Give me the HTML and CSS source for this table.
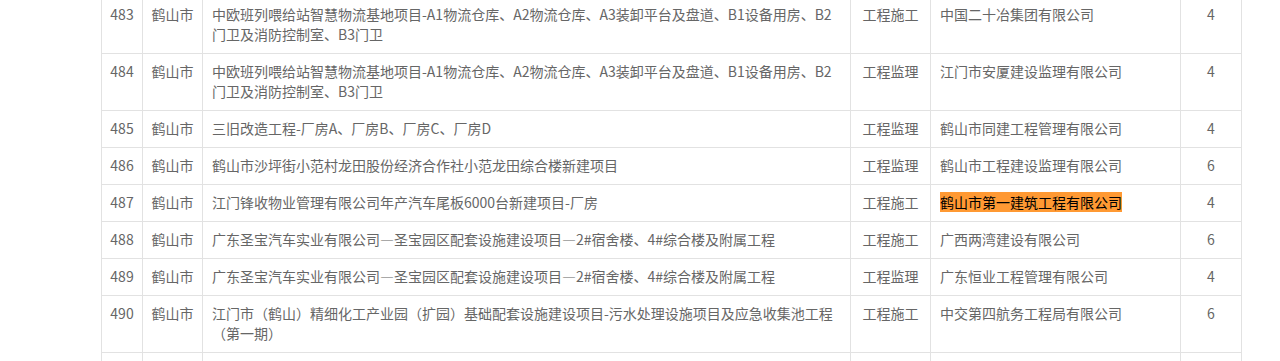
FILE: index.html
```html
<!DOCTYPE html>
<html lang="zh-CN">
<head>
<meta charset="utf-8">
<title>项目列表</title>
<link rel="stylesheet" href="styles.css">
</head>
<body>
<div class="page">
  <table class="list">
    <colgroup>
      <col class="c-no"><col class="c-city"><col class="c-name"><col class="c-type"><col class="c-unit"><col class="c-num">
    </colgroup>
    <tbody>
      <tr><td class="ctr">483</td><td class="ctr">鹤山市</td><td>中欧班列喂给站智慧物流基地项目-A1物流仓库、A2物流仓库、A3装卸平台及盘道、B1设备用房、B2门卫及消防控制室、B3门卫</td><td class="ctr">工程施工</td><td>中国二十冶集团有限公司</td><td class="ctr">4</td></tr>
      <tr><td class="ctr">484</td><td class="ctr">鹤山市</td><td>中欧班列喂给站智慧物流基地项目-A1物流仓库、A2物流仓库、A3装卸平台及盘道、B1设备用房、B2门卫及消防控制室、B3门卫</td><td class="ctr">工程监理</td><td>江门市安厦建设监理有限公司</td><td class="ctr">4</td></tr>
      <tr><td class="ctr">485</td><td class="ctr">鹤山市</td><td>三旧改造工程-厂房A、厂房B、厂房C、厂房D</td><td class="ctr">工程监理</td><td>鹤山市同建工程管理有限公司</td><td class="ctr">4</td></tr>
      <tr><td class="ctr">486</td><td class="ctr">鹤山市</td><td>鹤山市沙坪街小范村龙田股份经济合作社小范龙田综合楼新建项目</td><td class="ctr">工程监理</td><td>鹤山市工程建设监理有限公司</td><td class="ctr">6</td></tr>
      <tr><td class="ctr">487</td><td class="ctr">鹤山市</td><td>江门锋收物业管理有限公司年产汽车尾板6000台新建项目-厂房</td><td class="ctr">工程施工</td><td><span class="hl">鹤山市第一建筑工程有限公司</span></td><td class="ctr">4</td></tr>
      <tr><td class="ctr">488</td><td class="ctr">鹤山市</td><td>广东圣宝汽车实业有限公司—圣宝园区配套设施建设项目—2#宿舍楼、4#综合楼及附属工程</td><td class="ctr">工程施工</td><td>广西两湾建设有限公司</td><td class="ctr">6</td></tr>
      <tr><td class="ctr">489</td><td class="ctr">鹤山市</td><td>广东圣宝汽车实业有限公司—圣宝园区配套设施建设项目—2#宿舍楼、4#综合楼及附属工程</td><td class="ctr">工程监理</td><td>广东恒业工程管理有限公司</td><td class="ctr">4</td></tr>
      <tr><td class="ctr">490</td><td class="ctr">鹤山市</td><td>江门市（鹤山）精细化工产业园（扩园）基础配套设施建设项目-污水处理设施项目及应急收集池工程（第一期）</td><td class="ctr">工程施工</td><td>中交第四航务工程局有限公司</td><td class="ctr">6</td></tr>
      <tr class="empty"><td></td><td></td><td></td><td></td><td></td><td></td></tr>
    </tbody>
  </table>
</div>
</body>
</html>
```

FILE: styles.css
```css
html, body {
  margin: 0;
  padding: 0;
  background: #fff;
}
body {
  font-family: "Microsoft YaHei", "Noto Sans CJK SC", "Noto Sans", sans-serif;
  font-size: 14px;
  color: #666;
}
.page {
  padding-left: 101px;
  margin-top: -4px;
}
.list {
  border-collapse: collapse;
  table-layout: fixed;
  width: 1140px;
}
.c-no { width: 41px; }
.c-city { width: 60px; }
.c-name { width: 648px; }
.c-type { width: 80px; }
.c-unit { width: 250px; }
.c-num { width: 61px; }
.list td {
  border: 1px solid #e2e2e2;
  padding: 7px 9px 9px;
  line-height: 20px;
  vertical-align: top;
  text-align: left;
}
.list td.ctr {
  text-align: center;
  padding-left: 4px;
  padding-right: 4px;
}
.list .empty td {
  height: 20px;
}
.hl {
  background: #ff9933;
  color: #000;
}
```
